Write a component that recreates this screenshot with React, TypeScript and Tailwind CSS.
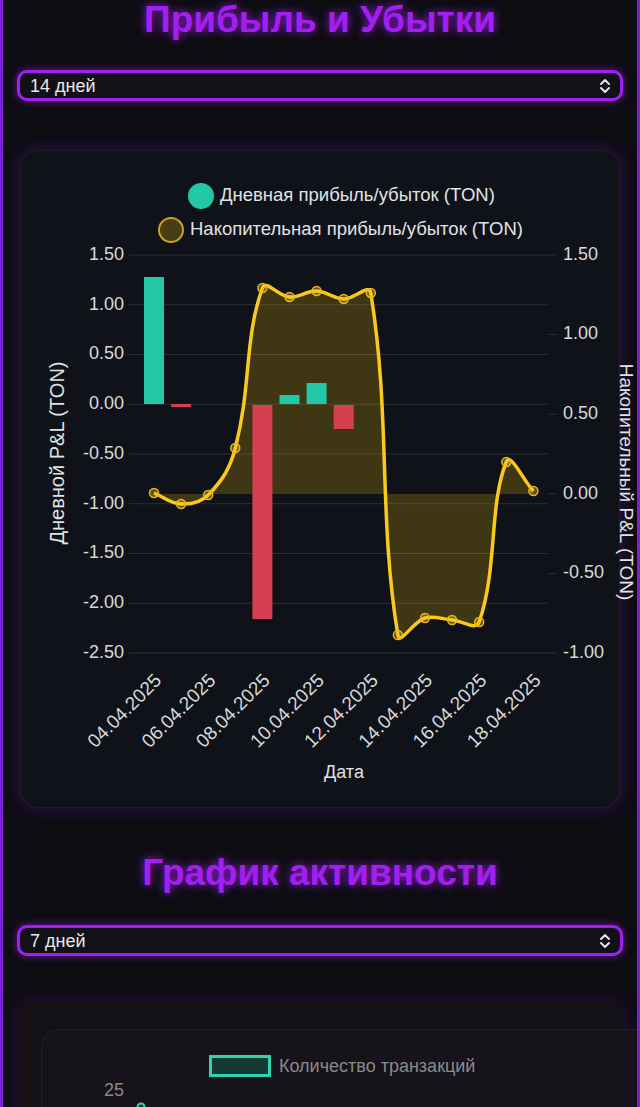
import React from 'react';

type Pt = { x: number; y: number };

// cumulative line, already in pixel coords (page space)
const lineY = [492, 503, 494, 447, 287, 296, 290, 298, 292, 634, 617, 619, 621, 461, 490];
const xAt = (i: number) => 153 + 27.1 * i;

const bars = [
  { i: 0, top: 276, bottom: 403, color: '#22c8a5' },
  { i: 1, top: 403, bottom: 406, color: '#d4404f' },
  { i: 4, top: 404, bottom: 618, color: '#d4404f' },
  { i: 5, top: 394, bottom: 403, color: '#22c8a5' },
  { i: 6, top: 382, bottom: 403, color: '#22c8a5' },
  { i: 7, top: 404, bottom: 428, color: '#d4404f' },
];

const leftTicks = ['1.50', '1.00', '0.50', '0.00', '-0.50', '-1.00', '-1.50', '-2.00', '-2.50'];
const rightTicks = ['1.50', '1.00', '0.50', '0.00', '-0.50', '-1.00'];
const dates = ['04.04.2025', '06.04.2025', '08.04.2025', '10.04.2025', '12.04.2025', '14.04.2025', '16.04.2025', '18.04.2025'];

// same spline as chart.js (tension 0.4)
function splinePath(pts: Pt[], t = 0.4) {
  const cps = pts.map((cur, i) => {
    const prev = pts[i - 1] || cur;
    const next = pts[i + 1] || cur;
    const d01 = Math.hypot(cur.x - prev.x, cur.y - prev.y);
    const d12 = Math.hypot(next.x - cur.x, next.y - cur.y);
    let s01 = d01 / (d01 + d12);
    let s12 = d12 / (d01 + d12);
    if (isNaN(s01)) s01 = 0;
    if (isNaN(s12)) s12 = 0;
    const fa = t * s01;
    const fb = t * s12;
    return {
      prev: { x: cur.x - fa * (next.x - prev.x), y: cur.y - fa * (next.y - prev.y) },
      next: { x: cur.x + fb * (next.x - prev.x), y: cur.y + fb * (next.y - prev.y) },
    };
  });
  let d = `M${pts[0].x},${pts[0].y}`;
  for (let i = 1; i < pts.length; i++) {
    const a = cps[i - 1].next;
    const b = cps[i].prev;
    d += ` C${a.x.toFixed(1)},${a.y.toFixed(1)} ${b.x.toFixed(1)},${b.y.toFixed(1)} ${pts[i].x},${pts[i].y}`;
  }
  return d;
}

function Chevrons() {
  return (
    <svg width="12" height="16" viewBox="0 0 12 16" fill="none" stroke="#e5e5e5" strokeWidth="2" strokeLinecap="round" strokeLinejoin="round">
      <path d="M2 6 L6 2 L10 6" />
      <path d="M2 10 L6 14 L10 10" />
    </svg>
  );
}

function PeriodSelect({ label }: { label: string }) {
  return (
    <div className="flex h-[31px] items-center justify-between rounded-[10px] border-[3px] border-[#a21ff2] bg-[#131118] pl-[10px] pr-[9px] shadow-[0_0_8px_rgba(168,32,240,0.6)]">
      <span className="text-[18px] leading-none text-[#e8e8e8]">{label}</span>
      <Chevrons />
    </div>
  );
}

function Title({ children }: { children: React.ReactNode }) {
  return (
    <h2 className="text-center text-[37px] font-bold leading-[40px] text-[#a21ff2] [text-shadow:0_0_10px_rgba(168,32,240,0.9)]">
      {children}
    </h2>
  );
}

function PnlChart() {
  const pts = lineY.map((y, i) => ({ x: xAt(i), y }));
  const line = splinePath(pts);
  const area = `${line} L${pts[pts.length - 1].x},493 L${pts[0].x},493 Z`;
  const txt = '#d9d9d9';

  return (
    <svg width="600" height="658" viewBox="20 150 600 658" className="block overflow-visible" fontFamily='"Liberation Sans", Arial, sans-serif' fontSize="18">
      {/* legend */}
      <circle cx="200" cy="195" r="13" fill="#22c8a5" />
      <text x="219" y="195" fill="#e2e2e2" fontSize="18.5" dominantBaseline="middle">Дневная прибыль/убыток (TON)</text>
      <circle cx="170" cy="229" r="12" fill="#4a3c14" stroke="#c9a227" strokeWidth="2" />
      <text x="189" y="229" fill="#e2e2e2" fontSize="18.5" dominantBaseline="middle">Накопительная прибыль/убыток (TON)</text>

      {/* grid + left ticks */}
      {leftTicks.map((t, i) => {
        const y = 254 + i * 49.75;
        return (
          <g key={t}>
            <line x1="128" x2="547" y1={y} y2={y} stroke="rgba(255,255,255,0.12)" strokeWidth="1" />
            <text x="123" y={y} fill={txt} textAnchor="end" dominantBaseline="middle">{t}</text>
          </g>
        );
      })}
      {/* right ticks */}
      {rightTicks.map((t, i) => {
        const y = 254 + i * 79.6;
        return (
          <g key={t}>
            <line x1="547" x2="556" y1={y} y2={y} stroke="rgba(255,255,255,0.12)" strokeWidth="1" />
            <text x="562" y={y} fill={txt} dominantBaseline="middle">{t}</text>
          </g>
        );
      })}

      {/* fill of cumulative line */}
      <path d={area} fill="rgba(255,204,0,0.2)" />

      {/* bars */}
      {bars.map((b) => (
        <rect key={b.i} x={xAt(b.i) - 10} y={b.top} width="20" height={b.bottom - b.top} fill={b.color} />
      ))}

      {/* line */}
      <path d={line} fill="none" stroke="#fbc91c" strokeWidth="3.5" />
      {pts.map((p, i) => (
        <circle key={i} cx={p.x} cy={p.y} r="4.5" fill="rgba(247,197,30,0.35)" stroke="#e6b824" strokeWidth="1.5" />
      ))}

      {/* x labels */}
      {dates.map((d, i) => {
        const x = xAt(i * 2) + 5;
        return (
          <text key={d} x={x} y="677" fill={txt} fontSize="19" textAnchor="end" dominantBaseline="middle" transform={`rotate(-45 ${x} 677)`}>
            {d}
          </text>
        );
      })}

      {/* axis titles */}
      <text x="343" y="772" fill="#e2e2e2" textAnchor="middle" dominantBaseline="middle">Дата</text>
      <text x="58" y="452" fill="#e2e2e2" fontSize="20" textAnchor="middle" dominantBaseline="middle" transform="rotate(-90 58 452)">
        Дневной P&amp;L (TON)
      </text>
      <text x="624" y="481" fill="#e2e2e2" fontSize="19" textAnchor="middle" dominantBaseline="middle" transform="rotate(90 624 481)">
        Накопительный P&amp;L (TON)
      </text>
    </svg>
  );
}

function ActivityChart() {
  return (
    <svg width="640" height="160" viewBox="41 1028 640 160" className="block" fontFamily='"Liberation Sans", Arial, sans-serif' fontSize="18">
      <rect x="209.5" y="1054.5" width="59" height="19" fill="#143a33" stroke="#2ed3b0" strokeWidth="3" />
      <text x="278" y="1065" fill="#8a8a8a" dominantBaseline="middle">Количество транзакций</text>
      <text x="123" y="1089" fill="#8a8a8a" textAnchor="end" dominantBaseline="middle">25</text>
      <circle cx="140" cy="1105" r="3.5" fill="#143a33" stroke="#2ed3b0" strokeWidth="2" />
    </svg>
  );
}

export default function App() {
  return (
    <div className="min-h-screen w-[640px] overflow-hidden border-x-[3px] border-[#7b22d4] bg-[#0d0d12] px-[14px] font-['Liberation_Sans',Arial,sans-serif]">
      {/* P&L */}
      <Title>Прибыль и Убытки</Title>
      <div className="mt-[30px]">
        <PeriodSelect label="14 дней" />
      </div>
      <div className="mx-[3px] mt-[49px] h-[658px] rounded-[18px] border border-white/5 bg-[#10121a] shadow-[0_0_18px_rgba(120,20,200,0.35)]">
        <PnlChart />
      </div>

      {/* Activity */}
      <div className="mt-[45px]">
        <Title>График активности</Title>
      </div>
      <div className="mt-[32px]">
        <PeriodSelect label="7 дней" />
      </div>
      <div className="mt-[45px] rounded-[18px] bg-[#131016] pl-[24px] pt-[28px] shadow-[0_0_18px_rgba(120,20,200,0.3)]">
        <div className="mr-[-40px] h-[200px] overflow-hidden rounded-[18px] border border-white/5 bg-[#16131a]">
          <ActivityChart />
        </div>
      </div>
    </div>
  );
}
